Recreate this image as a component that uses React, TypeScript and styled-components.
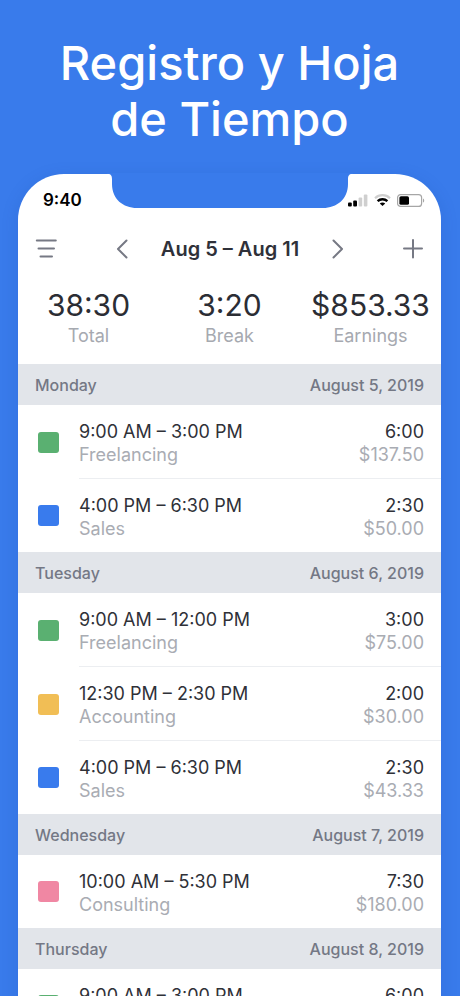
import React from "react";
import styled, { createGlobalStyle } from "styled-components";

const GlobalStyle = createGlobalStyle`
  *, *::before, *::after { box-sizing: border-box; }
  body {
    margin: 0;
    background: #397beb;
    font-family: Inter, Roboto, "Liberation Sans", sans-serif;
    -webkit-font-smoothing: antialiased;
  }
`;

const Page = styled.main`
  height: 100vh;
  overflow: hidden;
  padding: 35px 19px 0 18px;
  background: #397beb;
`;

const Headline = styled.h1`
  margin: 0 0 27px;
  color: #ffffff;
  font-size: 47px;
  font-weight: 500;
  line-height: 56px;
  text-align: center;
`;

const Phone = styled.section`
  position: relative;
  background: #ffffff;
  border-radius: 46px 46px 0 0;
  box-shadow: 0 4px 18px rgba(20, 60, 150, 0.14);
`;

const Notch = styled.svg`
  position: absolute;
  top: -1px;
  left: 50%;
  transform: translateX(-50%);
  display: block;
`;

const StatusBar = styled.div`
  display: flex;
  align-items: center;
  justify-content: space-between;
  height: 52px;
  padding: 0 16px 0 25px;
`;

const Clock = styled.time`
  color: #000000;
  font-size: 17px;
  font-weight: 600;
  line-height: 20px;
`;

const StatusIcons = styled.div`
  display: flex;
  align-items: center;
  gap: 6px;
`;

const Toolbar = styled.header`
  display: flex;
  align-items: center;
  justify-content: space-between;
  height: 46px;
  padding: 0 17px 0 16px;
`;

const IconButton = styled.button`
  display: flex;
  padding: 0;
  border: 0;
  background: transparent;
  color: #767984;
  cursor: pointer;
`;

const WeekPicker = styled.div`
  display: flex;
  align-items: center;
  justify-content: space-between;
  width: 228px;
`;

const WeekTitle = styled.h2`
  margin: 0;
  color: #2f3139;
  font-size: 20px;
  font-weight: 600;
  line-height: 24px;
`;

const Summary = styled.dl`
  display: grid;
  grid-template-columns: repeat(3, 1fr);
  margin: 0;
  padding: 14px 0 16px;
  text-align: center;
`;

const Stat = styled.div`
  display: flex;
  flex-direction: column-reverse;
  align-items: center;
`;

const StatLabel = styled.dt`
  color: #a6a9b0;
  font-size: 18px;
  line-height: 24px;
`;

const StatValue = styled.dd`
  margin: 0;
  color: #2b2d34;
  font-size: 30px;
  line-height: 38px;
`;

const DayHeader = styled.h3`
  display: flex;
  align-items: center;
  justify-content: space-between;
  height: 41px;
  margin: 0;
  padding: 0 17px;
  background: #e2e5ea;
  color: #747885;
  font-size: 16px;
  font-weight: 500;
  line-height: 20px;
`;

const Entries = styled.ul`
  margin: 0;
  padding: 0;
  list-style: none;
`;

const Entry = styled.li`
  display: flex;
  align-items: center;
  gap: 20px;
  padding-left: 20px;
`;

const Swatch = styled.span<{ $color: string }>`
  flex: none;
  width: 21px;
  height: 21px;
  border-radius: 3px;
  background: ${(p) => p.$color};
`;

const EntryBody = styled.div<{ $divided: boolean }>`
  display: grid;
  grid-template-columns: 1fr auto;
  flex: 1;
  padding: 15px 17px 12px 0;
  border-bottom: ${(p) => (p.$divided ? "1px solid #eceef1" : "0")};
`;

const Primary = styled.span`
  color: #2f3138;
  font-size: 18px;
  line-height: 23px;
  white-space: nowrap;
`;

const Secondary = styled.span`
  color: #a9acb3;
  font-size: 18px;
  line-height: 23px;
`;

const Hours = styled(Primary)`
  text-align: right;
`;

const Amount = styled(Secondary)`
  text-align: right;
`;

const GREEN = "#5ab071";
const BLUE = "#397bed";
const YELLOW = "#f1be55";
const PINK = "#f087a3";

interface TimeEntry {
  range: string;
  project: string;
  hours: string;
  amount: string;
  color: string;
}

interface Day {
  name: string;
  date: string;
  entries: TimeEntry[];
}

const days: Day[] = [
  {
    name: "Monday",
    date: "August 5, 2019",
    entries: [
      { range: "9:00 AM – 3:00 PM", project: "Freelancing", hours: "6:00", amount: "$137.50", color: GREEN },
      { range: "4:00 PM – 6:30 PM", project: "Sales", hours: "2:30", amount: "$50.00", color: BLUE },
    ],
  },
  {
    name: "Tuesday",
    date: "August 6, 2019",
    entries: [
      { range: "9:00 AM – 12:00 PM", project: "Freelancing", hours: "3:00", amount: "$75.00", color: GREEN },
      { range: "12:30 PM – 2:30 PM", project: "Accounting", hours: "2:00", amount: "$30.00", color: YELLOW },
      { range: "4:00 PM – 6:30 PM", project: "Sales", hours: "2:30", amount: "$43.33", color: BLUE },
    ],
  },
  {
    name: "Wednesday",
    date: "August 7, 2019",
    entries: [
      { range: "10:00 AM – 5:30 PM", project: "Consulting", hours: "7:30", amount: "$180.00", color: PINK },
    ],
  },
  {
    name: "Thursday",
    date: "August 8, 2019",
    entries: [
      { range: "9:00 AM – 3:00 PM", project: "Freelancing", hours: "6:00", amount: "$137.50", color: GREEN },
    ],
  },
];

const stats = [
  { label: "Total", value: "38:30" },
  { label: "Break", value: "3:20" },
  { label: "Earnings", value: "$853.33" },
];

const SignalIcon = () => (
  <svg width="20" height="13" viewBox="0 0 20 13" aria-hidden="true">
    <rect x="0" y="8.5" width="3.8" height="4" rx="1" fill="#000" />
    <rect x="5.2" y="6.5" width="3.8" height="6" rx="1" fill="#000" />
    <rect x="10.6" y="3.5" width="3.6" height="9" rx="1" fill="#cfcfcf" />
    <rect x="15.8" y="0.5" width="3.6" height="12" rx="1" fill="#cfcfcf" />
  </svg>
);

const WifiIcon = () => (
  <svg width="17" height="12" viewBox="0 0 17 12" fill="none" aria-hidden="true">
    <path d="M1 4.2C5.2 0.2 11.8 0.2 16 4.2" stroke="#cfcfcf" strokeWidth="2.2" />
    <path d="M3.6 7.2C6.4 4.6 10.6 4.6 13.4 7.2" stroke="#000" strokeWidth="2.4" />
    <path d="M8.5 12L5.8 9.5C7.3 8.2 9.7 8.2 11.2 9.5Z" fill="#000" />
  </svg>
);

const BatteryIcon = () => (
  <svg width="28" height="13" viewBox="0 0 28 13" fill="none" aria-hidden="true">
    <rect x="0.6" y="0.6" width="24" height="11.8" rx="3" stroke="#a6a6a6" strokeWidth="1.2" />
    <rect x="2.4" y="2.2" width="9.6" height="8.6" rx="1.6" fill="#000" />
    <path d="M26 4.4C27.6 5 27.6 8 26 8.6Z" fill="#a6a6a6" />
  </svg>
);

const MenuIcon = () => (
  <svg width="24" height="20" viewBox="0 0 24 20" fill="none" stroke="currentColor" strokeWidth="2" strokeLinecap="round" aria-hidden="true">
    <path d="M2.8 1.5H21.8M4.5 9.5H20M6.5 17.5H18" />
  </svg>
);

const ChevronIcon = ({ right = false }: { right?: boolean }) => (
  <svg width="12" height="20" viewBox="0 0 12 20" fill="none" stroke="currentColor" strokeWidth="2" strokeLinecap="round" strokeLinejoin="round" aria-hidden="true">
    <path d={right ? "M1.5 1.5L10 10L1.5 18.5" : "M10.5 1.5L2 10L10.5 18.5"} />
  </svg>
);

const PlusIcon = () => (
  <svg width="22" height="20" viewBox="0 0 22 20" fill="none" stroke="currentColor" strokeWidth="2" strokeLinecap="round" aria-hidden="true">
    <path d="M2 9.5H20M11 1V18.5" />
  </svg>
);

export default function App() {
  return (
    <>
      <GlobalStyle />
      <Page>
        <Headline>
          Registro y Hoja
          <br />
          de Tiempo
        </Headline>
        <Phone>
          <Notch width="246" height="35" viewBox="0 0 246 35" aria-hidden="true">
            <path
              d="M0 0V1H1C4 1 5 3 5 6V11C5 26 16 35 30 35H216C230 35 241 26 241 11V6C241 3 242 1 245 1H246V0Z"
              fill="#397beb"
            />
          </Notch>
          <StatusBar>
            <Clock>9:40</Clock>
            <StatusIcons>
              <SignalIcon />
              <WifiIcon />
              <BatteryIcon />
            </StatusIcons>
          </StatusBar>
          <Toolbar>
            <IconButton type="button" aria-label="Menu">
              <MenuIcon />
            </IconButton>
            <WeekPicker>
              <IconButton type="button" aria-label="Previous week">
                <ChevronIcon />
              </IconButton>
              <WeekTitle>Aug 5 – Aug 11</WeekTitle>
              <IconButton type="button" aria-label="Next week">
                <ChevronIcon right />
              </IconButton>
            </WeekPicker>
            <IconButton type="button" aria-label="Add entry">
              <PlusIcon />
            </IconButton>
          </Toolbar>
          <Summary>
            {stats.map((stat) => (
              <Stat key={stat.label}>
                <StatLabel>{stat.label}</StatLabel>
                <StatValue>{stat.value}</StatValue>
              </Stat>
            ))}
          </Summary>
          {days.map((day) => (
            <section key={day.name}>
              <DayHeader>
                <span>{day.name}</span>
                <time>{day.date}</time>
              </DayHeader>
              <Entries>
                {day.entries.map((entry, i) => (
                  <Entry key={entry.range}>
                    <Swatch $color={entry.color} />
                    <EntryBody $divided={i < day.entries.length - 1}>
                      <Primary>{entry.range}</Primary>
                      <Hours>{entry.hours}</Hours>
                      <Secondary>{entry.project}</Secondary>
                      <Amount>{entry.amount}</Amount>
                    </EntryBody>
                  </Entry>
                ))}
              </Entries>
            </section>
          ))}
        </Phone>
      </Page>
    </>
  );
}
